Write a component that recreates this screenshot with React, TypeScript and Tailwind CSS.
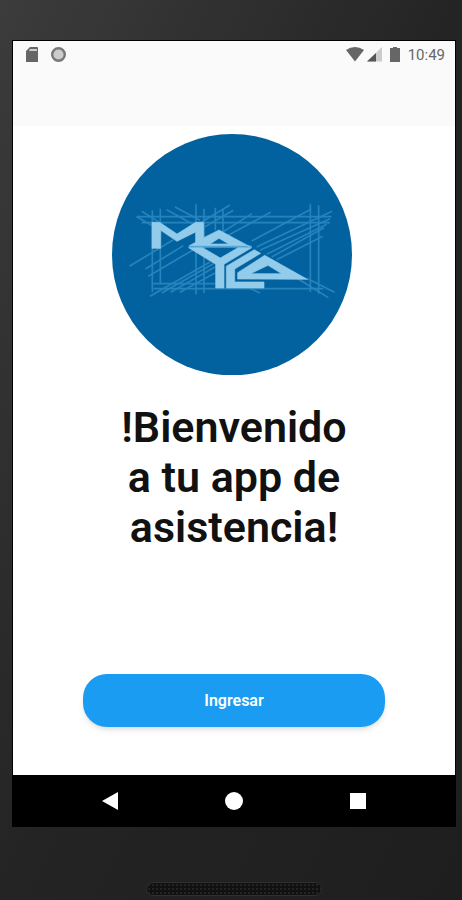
function Logo() {
  return (
    <svg viewBox="36 41 720 724" className="mr-1 block w-60" role="img" aria-label="Mayla">
      <ellipse cx="396" cy="403" rx="360" ry="362" fill="#02629f" />
      <g stroke="#3f9bd0" strokeWidth="5" opacity="0.6" fill="none">
        <path d="M110 289H694M125 307H690M155 490H345M160 505H670" />
        <path d="M157 270V515M181 265V490M288 252V522M312 265V518M346 262V330M369 268V340M631 250V515M656 255V520" />
        <path d="M88 438L220 358M300 308L390 254M136 446L250 376M310 322L400 270M145 468L280 388M150 528L330 425M185 518L340 430M212 516L345 440M240 516L345 458M325 362L456 280M375 350L512 276" />
        <path d="M455 362L634 266M470 380L696 273M480 390L690 295M500 402L680 312M515 410L672 322M530 418L668 348" />
        <path d="M110 289L160 318M125 273L185 310M200 268L290 318M225 260L300 300M585 470L685 532M620 474L704 516M440 500L480 518" />
      </g>
      <path d="M266 379H455" stroke="#4da3d4" strokeWidth="7" />
      <g fill="#93cceb" stroke="#93cceb" strokeWidth="2">
        <path d="M156 384V306H179L231 341L287 306H311V352L357 329L450 379L440 376H268L287 366V335L231 363L182 330V384ZM330 371H386L357 354Z" fillRule="evenodd" />
        <path d="M266 382H308L361 413L414 382H455L372 432V503H347V432Z" />
        <path d="M379 503V438L463 388L482 399L404 446V485H492V503Z" />
        <path d="M413 476V457L494 405L622 477ZM452 460H545L504 435Z" fillRule="evenodd" />
      </g>
    </svg>
  );
}

function StatusBar() {
  return (
    <div className="flex h-7 items-center justify-between pr-2.5 pl-3 text-[#666]">
      <div className="flex items-center gap-3">
        <svg viewBox="0 0 14 16" className="h-4 w-3.5" aria-hidden="true">
          <path d="M5 0h7q1 0 1 1v14H1V4z" fill="#666" />
          <path d="M5 2h7v2H4z" fill="#ccc" />
        </svg>
        <svg viewBox="0 0 16 16" className="size-4" aria-hidden="true">
          <circle cx="7.500" cy="7.500" r="6.300" fill="#ccc" stroke="#777" strokeWidth="2.400" />
        </svg>
      </div>
      <div className="flex items-center">
        <svg viewBox="0 0 18 16" className="h-4 w-[18px]" aria-hidden="true">
          <path d="M0 3Q9-3 18 3L9 14.500Z" fill="#666" />
        </svg>
        <svg viewBox="0 0 16 16" className="ml-0.5 size-4" aria-hidden="true">
          <path d="M16 0V14.500H1Z" fill="#ccc" />
          <path d="M10 6V14.500H1Z" fill="#555" />
        </svg>
        <svg viewBox="0 0 10 16" className="ml-2 h-4 w-2.5" aria-hidden="true">
          <path d="M3 0h4V1h3v14H0V1h3z" fill="#666" />
        </svg>
        <span className="ml-2 text-[15px] leading-7">10:49</span>
      </div>
    </div>
  );
}

function NavBar() {
  return (
    <nav className="flex h-[52px] items-center justify-center gap-[106px] bg-black">
      <button type="button" aria-label="Atrás">
        <svg viewBox="0 0 18 18" className="size-[18px]"><path d="M17 0V18L1 9Z" fill="#fff" /></svg>
      </button>
      <button type="button" aria-label="Inicio">
        <svg viewBox="0 0 18 18" className="size-[18px]"><circle cx="9" cy="9" r="9" fill="#fff" /></svg>
      </button>
      <button type="button" aria-label="Recientes">
        <svg viewBox="0 0 18 18" className="size-[18px]"><path d="M1 1H17V17H1Z" fill="#fff" /></svg>
      </button>
    </nav>
  );
}

export default function App() {
  return (
    <div className="flex min-h-screen flex-col bg-linear-to-br from-[#3c3c3c] via-[#242424] to-[#1e1e1e] pt-10 pr-1.5 pl-3 font-[Roboto,sans-serif]">
      <div className="flex flex-1 flex-col border-t border-r border-l border-black bg-white">
        <header className="h-[85px] bg-[#fafafa]">
          <StatusBar />
        </header>
        <main className="flex flex-1 flex-col items-center pt-2">
          <Logo />
          <h1 className="mt-[27px] w-60 text-center text-[43px] leading-[50px] font-semibold text-[#111]">
            !Bienvenido a tu app de asistencia!
          </h1>
          <button
            type="button"
            className="mt-auto mb-12 h-[53px] w-[302px] rounded-3xl bg-[#199cf2] text-base font-semibold text-white shadow-md"
          >
            Ingresar
          </button>
        </main>
        <NavBar />
      </div>
      <footer className="flex h-[73px] items-end justify-center pb-1">
        <div className="h-3.5 w-44 rounded-full border border-[#303030] bg-[#111] bg-[radial-gradient(#242424_1px,transparent_1px)] bg-[size:4px_4px]" />
      </footer>
    </div>
  );
}
